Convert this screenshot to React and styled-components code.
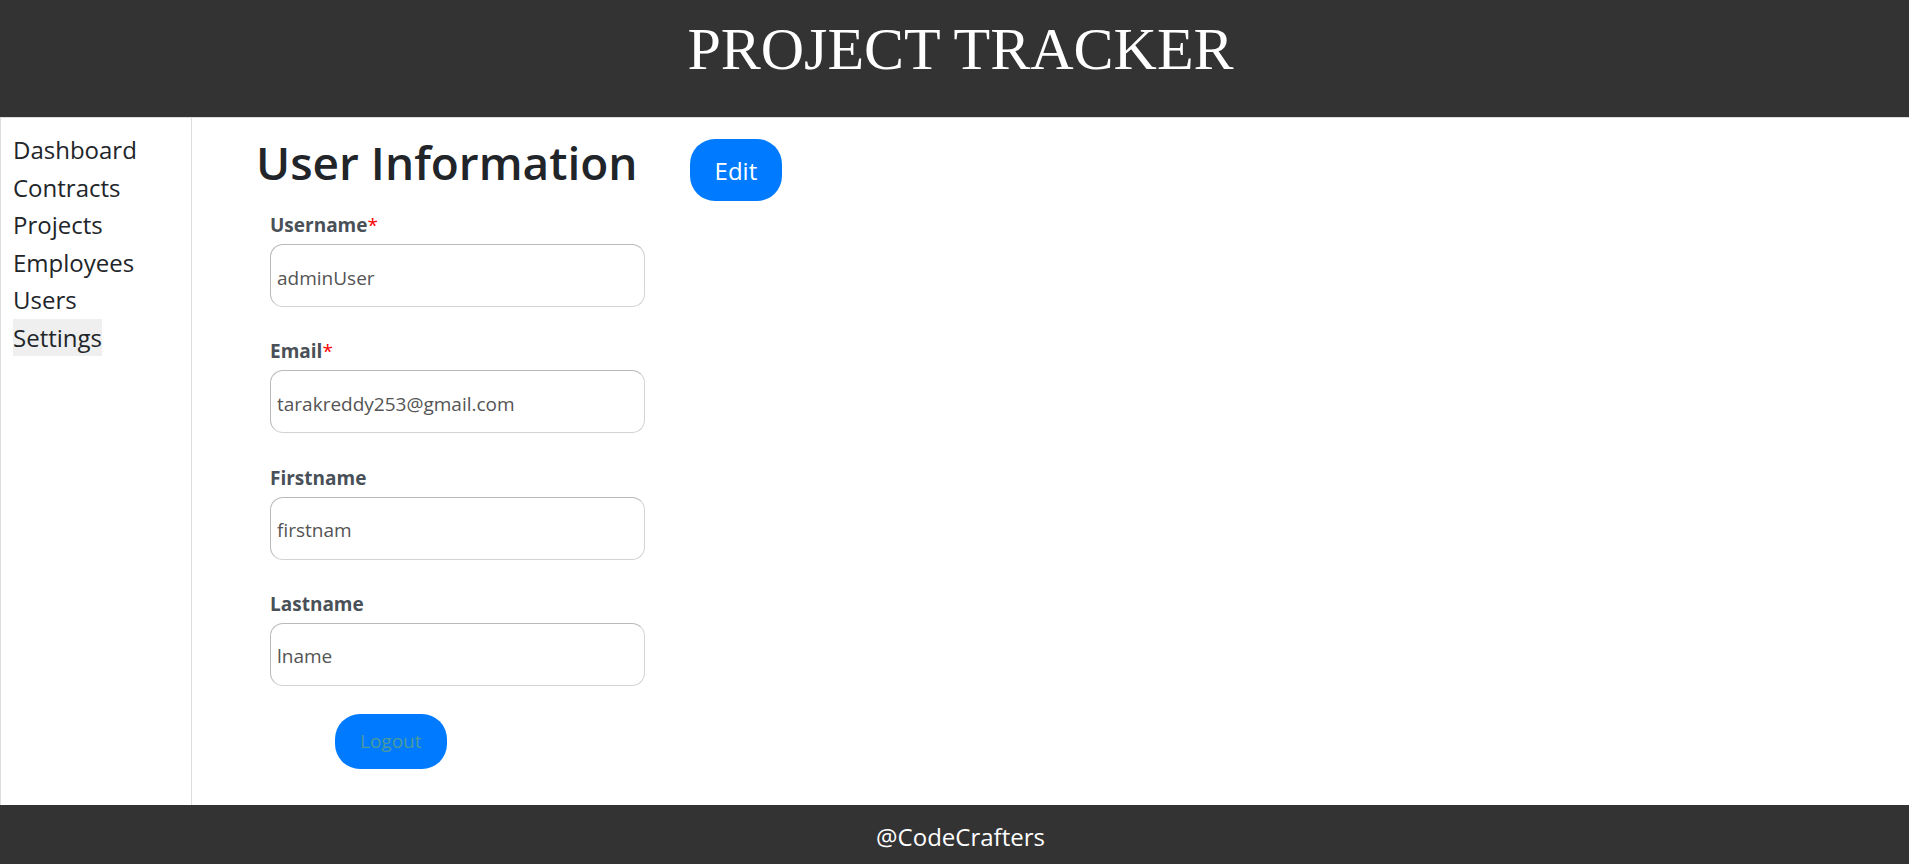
import React from "react";
import styled, { createGlobalStyle } from "styled-components";

const GlobalStyle = createGlobalStyle`
  *, *::before, *::after { box-sizing: border-box; }
  body {
    margin: 0;
    background: #fff;
    color: #212529;
    font-family: "Open Sans", "Noto Sans", sans-serif;
    font-size: 24px;
    line-height: 37px;
  }
`;

const Page = styled.div`
  display: flex;
  flex-direction: column;
  min-height: 100vh;
`;

const Header = styled.header`
  height: 117px;
  padding: 15px 0 0 12px;
  background: #333;
  color: #fff;
  text-align: center;
`;

const Brand = styled.div`
  font-family: "Liberation Serif", serif;
  font-size: 60px;
  line-height: 68px;
`;

const Body = styled.div`
  display: flex;
  flex: 1;
  border-top: 1px solid #ddd;
`;

const Sidebar = styled.nav`
  width: 192px;
  padding: 13px 12px;
  border: solid #ddd;
  border-width: 0 1px;
`;

const Menu = styled.ul`
  display: flex;
  flex-direction: column;
  justify-content: space-between;
  align-items: flex-start;
  height: 225px;
  margin: 0;
  padding: 0;
  list-style: none;
`;

const MenuLink = styled.a`
  display: block;
  color: inherit;
  text-decoration: none;
  background: ${(p) => (p.$active ? "#efefef" : "transparent")};
`;

const Main = styled.main`
  flex: 1;
  padding: 14px 64px 36px;
`;

const TitleRow = styled.div`
  display: flex;
  align-items: flex-start;
  gap: 52px;
  margin-bottom: 10px;
`;

const Title = styled.h1`
  margin: 0;
  font-size: 46px;
  font-weight: 600;
  line-height: 60px;
`;

const Button = styled.button`
  margin: 0;
  padding: 0 25px;
  height: ${(p) => (p.$small ? 55 : 62)}px;
  border: 0;
  border-radius: 25px;
  background: #007bff;
  color: ${(p) => (p.$small ? "#4c9a9c" : "#fff")};
  font: inherit;
  font-size: ${(p) => (p.$small ? 19 : 24)}px;
  cursor: pointer;
`;

const EditSlot = styled.div`
  padding-top: 7px;
`;

const Form = styled.form`
  width: 375px;
  margin-left: 14px;
`;

const Fields = styled.div`
  display: flex;
  flex-direction: column;
  justify-content: space-between;
  height: 475px;
`;

const Label = styled.label`
  display: block;
  height: 33px;
  color: #495057;
  font-size: 19px;
  font-weight: 700;
  line-height: 28px;
`;

const Required = styled.span`
  color: #f00;
  font-weight: 400;
`;

const Input = styled.input`
  display: block;
  width: 100%;
  height: 63px;
  padding: 4px 6px 0;
  border: 1px solid;
  border-color: #b9b9b9 #d3d3d3 #d3d3d3 #b9b9b9;
  border-radius: 13px;
  background: #fff;
  color: #545454;
  font: inherit;
  font-size: 19px;
`;

const Actions = styled.div`
  padding: 28px 65px 0;
`;

const Footer = styled.footer`
  height: 59px;
  padding: 13px 0 0 12px;
  background: #333;
  color: #fff;
  text-align: center;
`;

const menu = ["Dashboard", "Contracts", "Projects", "Employees", "Users", "Settings"];

const fields = [
  { id: "username", label: "Username", value: "adminUser", required: true },
  { id: "email", label: "Email", value: "tarakreddy253@gmail.com", required: true },
  { id: "firstname", label: "Firstname", value: "firstnam" },
  { id: "lastname", label: "Lastname", value: "lname" },
];

export default function App() {
  return (
    <Page>
      <GlobalStyle />
      <Header>
        <Brand>PROJECT TRACKER</Brand>
      </Header>
      <Body>
        <Sidebar>
          <Menu>
            {menu.map((name) => (
              <li key={name}>
                <MenuLink href={`#${name.toLowerCase()}`} $active={name === "Settings"}>
                  {name}
                </MenuLink>
              </li>
            ))}
          </Menu>
        </Sidebar>
        <Main>
          <TitleRow>
            <Title>User Information</Title>
            <EditSlot>
              <Button type="button">Edit</Button>
            </EditSlot>
          </TitleRow>
          <Form>
            <Fields>
              {fields.map((f) => (
                <div key={f.id}>
                  <Label htmlFor={f.id}>
                    {f.label}
                    {f.required && <Required>*</Required>}
                  </Label>
                  <Input id={f.id} defaultValue={f.value} disabled />
                </div>
              ))}
            </Fields>
            <Actions>
              <Button type="button" $small>
                Logout
              </Button>
            </Actions>
          </Form>
        </Main>
      </Body>
      <Footer>@CodeCrafters</Footer>
    </Page>
  );
}
